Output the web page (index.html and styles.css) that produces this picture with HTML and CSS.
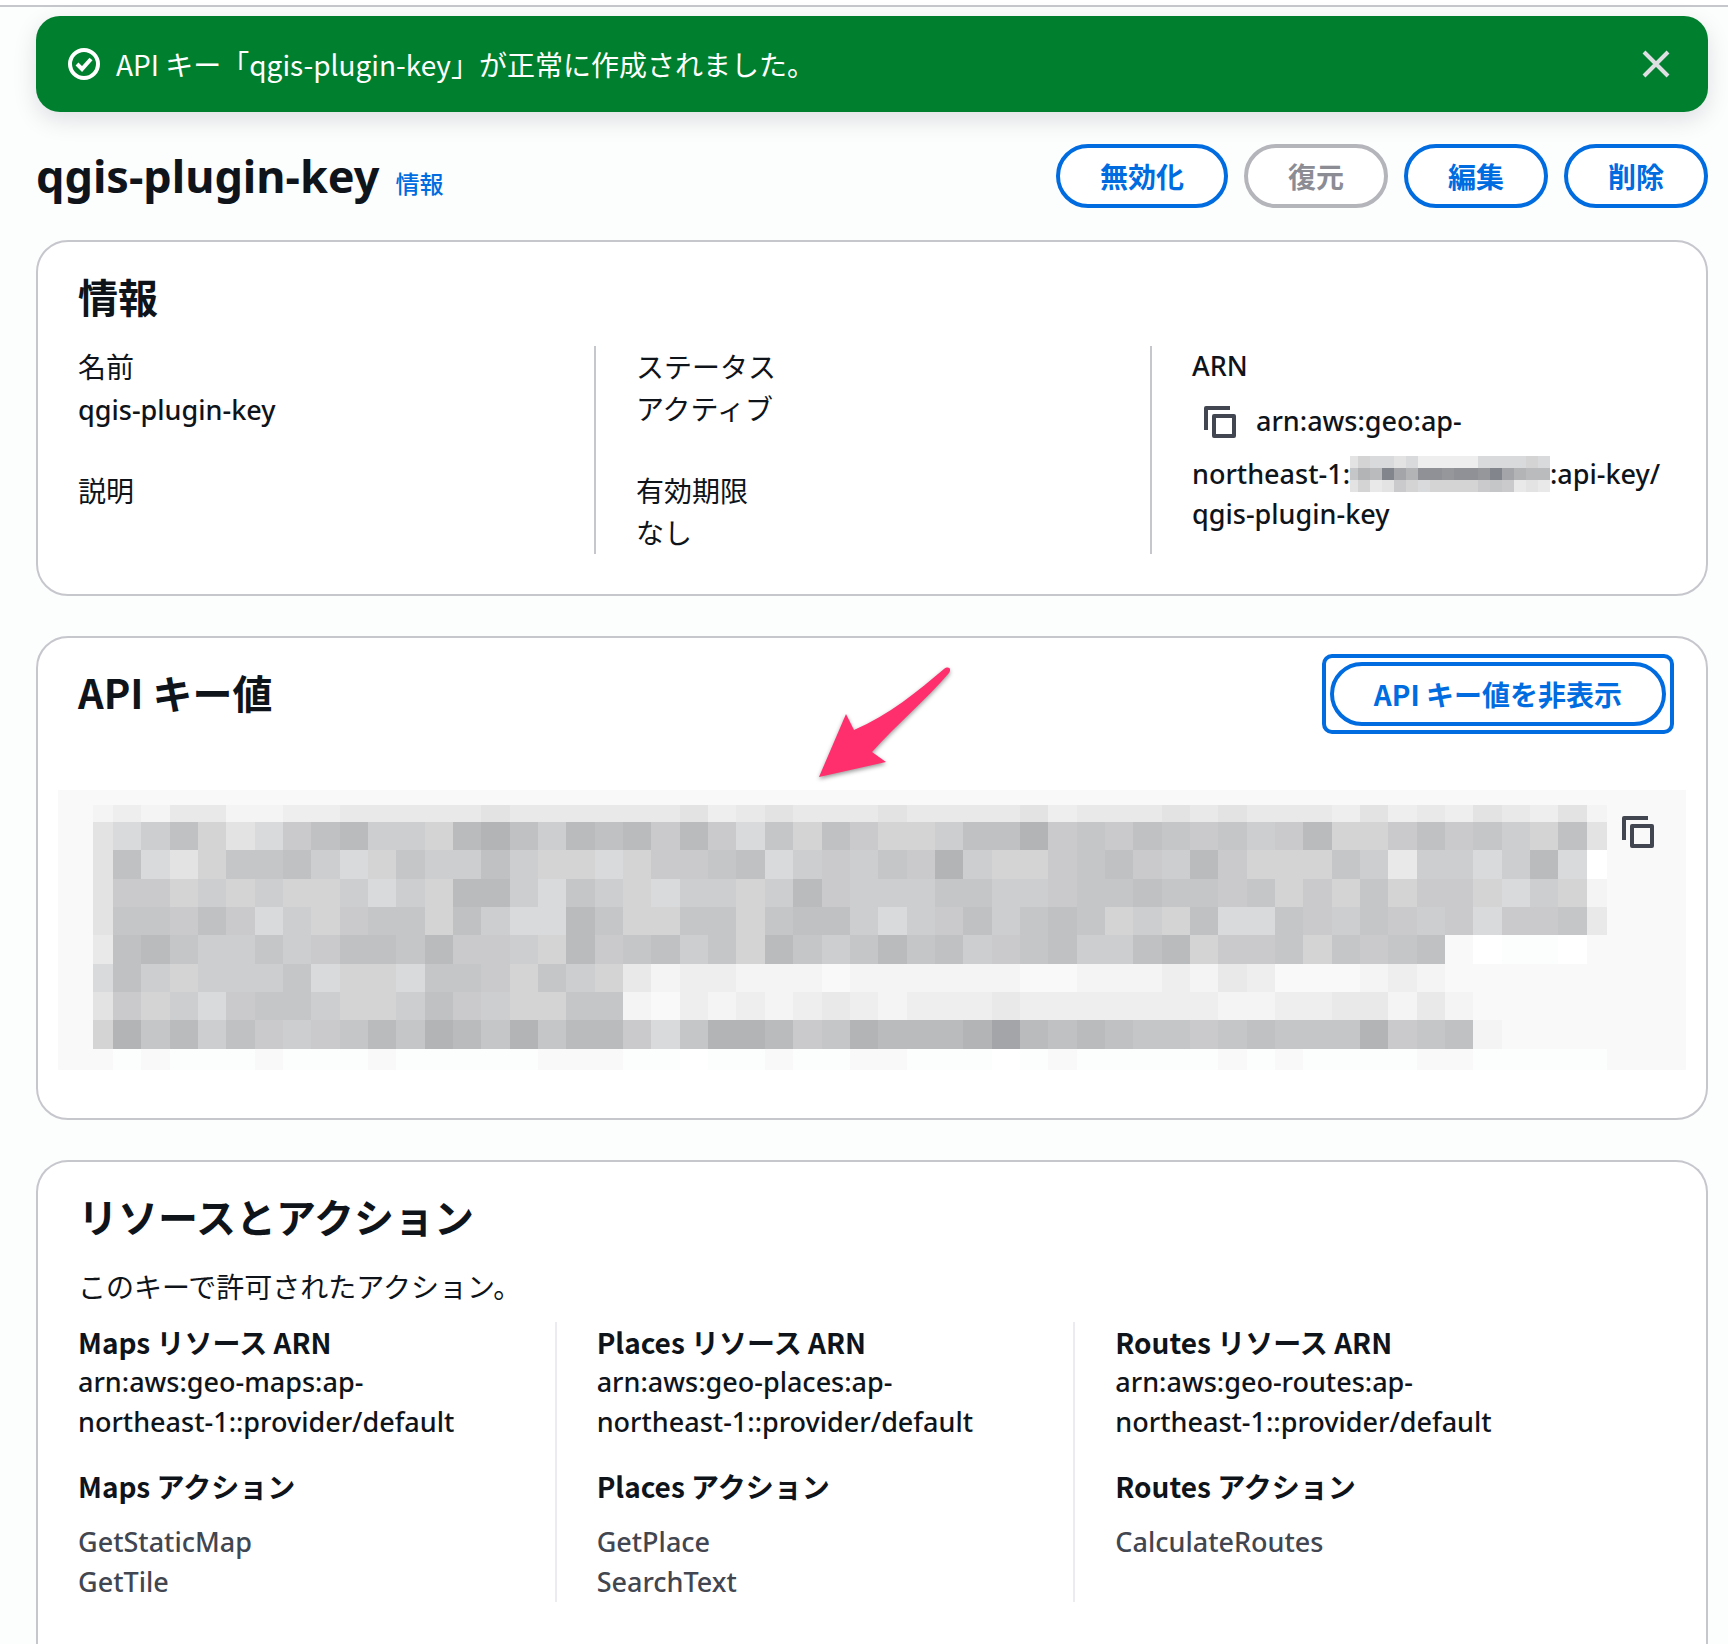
FILE: index.html
```html
<!DOCTYPE html>
<html lang="ja">
<head>
<meta charset="utf-8">
<meta name="viewport" content="width=device-width, initial-scale=1">
<title>qgis-plugin-key</title>
<link rel="stylesheet" href="styles.css">
</head>
<body>
<svg class="sprite" aria-hidden="true">
  <symbol id="icon-copy" viewBox="0 0 32 32">
    <path d="M2 24V2H26" fill="none" stroke="currentColor" stroke-width="4" stroke-linejoin="round"/>
    <rect x="10" y="10" width="20" height="20" fill="none" stroke="currentColor" stroke-width="4" stroke-linejoin="round"/>
  </symbol>
</svg>
<main class="page">
  <div class="flash" role="status">
    <svg class="flash-icon" viewBox="0 0 32 32" aria-hidden="true">
      <circle cx="16" cy="16" r="14" fill="none" stroke="currentColor" stroke-width="4"/>
      <path d="M9 16l5 5 9-10" fill="none" stroke="currentColor" stroke-width="4"/>
    </svg>
    <p class="flash-text">API キー「qgis-plugin-key」が正常に作成されました。</p>
    <button class="icon-button flash-close" type="button" aria-label="閉じる">
      <svg viewBox="0 0 32 32" aria-hidden="true"><path d="M4 4l24 24M28 4L4 28" fill="none" stroke="currentColor" stroke-width="4"/></svg>
    </button>
  </div>

  <header class="page-header">
    <div class="page-title">
      <h1>qgis-plugin-key</h1>
      <a class="info-link" href="#">情報</a>
    </div>
    <div class="actions">
      <button class="button" type="button">無効化</button>
      <button class="button" type="button" disabled>復元</button>
      <button class="button" type="button">編集</button>
      <button class="button" type="button">削除</button>
    </div>
  </header>

  <section class="card">
    <div class="card-header"><h2>情報</h2></div>
    <div class="columns details">
      <dl class="column">
        <div><dt>名前</dt><dd class="latin">qgis-plugin-key</dd></div>
        <div><dt>説明</dt><dd></dd></div>
      </dl>
      <dl class="column">
        <div><dt>ステータス</dt><dd>アクティブ</dd></div>
        <div><dt>有効期限</dt><dd>なし</dd></div>
      </dl>
      <dl class="column latin">
        <div>
          <dt>ARN</dt>
          <dd class="arn"><button class="icon-button copy-inline" type="button" aria-label="ARN をコピー"><svg aria-hidden="true"><use href="#icon-copy"/></svg></button>arn:aws:geo:ap-<br>northeast-1:<svg class="mask" id="account-mask" role="img" aria-label="非表示のアカウント ID"></svg>:api-key/<br>qgis-plugin-key</dd>
        </div>
      </dl>
    </div>
  </section>

  <section class="card key-card">
    <div class="card-header">
      <h2>API キー値</h2>
      <button class="button focused" type="button">API キー値を非表示</button>
    </div>
    <div class="key-box">
      <svg class="key-mask" id="key-mask" role="img" aria-label="非表示の API キー値"></svg>
      <button class="icon-button" type="button" aria-label="API キー値をコピー"><svg aria-hidden="true"><use href="#icon-copy"/></svg></button>
    </div>
    <svg class="arrow" viewBox="0 0 140 120" aria-hidden="true">
      <path d="M4 113L31 50L39 66C74 51 103 27 129 5C133 2 137 4 134 9C109 38 83 59 57 88L71 98Z" fill="#ff2e6c"/>
    </svg>
  </section>

  <section class="card last-card">
    <div class="card-header"><h2>リソースとアクション</h2></div>
    <p class="description">このキーで許可されたアクション。</p>
    <div class="columns resources">
      <div class="column">
        <h3>Maps リソース ARN</h3>
        <p class="latin">arn:aws:geo-maps:ap-<br>northeast-1::provider/default</p>
        <h3 class="spaced">Maps アクション</h3>
        <ul class="latin"><li>GetStaticMap</li><li>GetTile</li></ul>
      </div>
      <div class="column">
        <h3>Places リソース ARN</h3>
        <p class="latin">arn:aws:geo-places:ap-<br>northeast-1::provider/default</p>
        <h3 class="spaced">Places アクション</h3>
        <ul class="latin"><li>GetPlace</li><li>SearchText</li></ul>
      </div>
      <div class="column">
        <h3>Routes リソース ARN</h3>
        <p class="latin">arn:aws:geo-routes:ap-<br>northeast-1::provider/default</p>
        <h3 class="spaced">Routes アクション</h3>
        <ul class="latin"><li>CalculateRoutes</li></ul>
      </div>
    </div>
  </section>
</main>
<script src="mask.js"></script>
</body>
</html>
```
FILE: styles.css
```css
* { box-sizing: border-box; }

body {
  margin: 0;
  background: #fcfdfd;
  color: #0f141a;
  font: 400 28px/40px "Noto Sans CJK JP", sans-serif;
}

h1, h2, h3, p, dl, dd, ul { margin: 0; padding: 0; }
ul { list-style: none; }
.sprite { display: none; }

.latin {
  font-family: "Noto Sans", "Noto Sans CJK JP", sans-serif;
  font-size: 27px;
  font-weight: 500;
}

.page {
  display: flex;
  flex-direction: column;
  min-height: 100vh;
  padding: 16px 20px 0 36px;
  background: linear-gradient(#fff 5px, #c6c6cd 5px, #c6c6cd 7px, transparent 7px);
}

.flash {
  display: flex;
  align-items: center;
  gap: 16px;
  min-height: 96px;
  padding: 16px 36px 16px 32px;
  border-radius: 24px;
  background: #00802f;
  color: #fff;
  box-shadow: 0 8px 24px rgba(0, 7, 22, 0.12);
}
.flash-icon { flex: none; width: 32px; height: 32px; }
.flash-text { flex: 1; }

.icon-button {
  flex: none;
  width: 32px;
  height: 32px;
  padding: 0;
  border: 0;
  background: none;
  color: #424650;
}
.icon-button svg { display: block; width: 32px; height: 32px; }
.icon-button.flash-close { color: #dedee3; }

.page-header {
  display: flex;
  justify-content: space-between;
  align-items: center;
  margin: 32px 0;
}
.page-title { display: flex; align-items: baseline; gap: 16px; }
h1 { font: 700 45px/60px "Noto Sans", sans-serif; }
.info-link { color: #006ce0; font-size: 24px; font-weight: 500; text-decoration: none; }
.actions { display: flex; gap: 16px; }

.button {
  height: 64px;
  padding: 0 40px;
  border: 4px solid #006ce0;
  border-radius: 32px;
  background: #fff;
  color: #006ce0;
  font: 700 28px/40px "Noto Sans CJK JP", sans-serif;
}
.button:disabled { border-color: #b4b4bb; color: #8c8c94; }
.focused { position: relative; outline: 4px solid transparent; }
.focused::after {
  content: "";
  position: absolute;
  inset: -12px;
  border: 4px solid #006ce0;
  border-radius: 10px;
}

.card {
  padding: 24px 40px 40px;
  margin-bottom: 40px;
  border: 2px solid #c6c6cd;
  border-radius: 32px;
  background: #fff;
}
.card-header {
  display: flex;
  justify-content: space-between;
  align-items: center;
  min-height: 64px;
  margin-bottom: 16px;
}
h2 { padding-bottom: 4px; font-size: 40px; line-height: 48px; font-weight: 700; }
h3 { font-size: 28px; line-height: 40px; font-weight: 700; }

.columns { display: grid; grid-template-columns: repeat(3, minmax(0, 1fr)); gap: 80px; }
.column + .column {
  margin-left: -40px;
  padding-left: 40px;
  border-left: 2px solid #c6c6cd;
}
.details .column { display: flex; flex-direction: column; gap: 40px; }
.details dd { min-height: 44px; line-height: 44px; }
.details dd.latin { margin-bottom: -4px; line-height: 48px; }
.details .arn { padding-top: 8px; line-height: 40px; }
.copy-inline { width: 56px; height: 60px; padding: 12px 12px 16px; margin-right: 8px; vertical-align: middle; }
.mask { width: 200px; height: 36px; vertical-align: -8px; }

.key-card { position: relative; padding-bottom: 48px; }
.key-card .card-header { margin-bottom: 64px; }
.key-box {
  display: flex;
  align-items: flex-start;
  gap: 15px;
  margin: 0 -20px;
  padding: 15px 32px 0 35px;
  background: #f9f9f9;
}
.key-mask { flex: 1; min-width: 0; height: 265px; }
.key-box .icon-button { margin-top: 11px; }
.arrow {
  position: absolute;
  left: 46.6%;
  top: 26px;
  width: 140px;
  height: 120px;
  filter: drop-shadow(0 2px 2px rgba(0, 0, 0, 0.4));
}

.last-card {
  flex: 1;
  margin-bottom: 0;
  border-bottom: 0;
  border-radius: 32px 32px 0 0;
}
.description { margin-bottom: 16px; }
.resources { padding-right: 112px; }
.resources .column + .column { margin-left: -42px; border-left-color: #ebebf0; }
.spaced { margin: 24px 0 16px; }
.resources ul { color: #424650; }
```
FILE: mask.js
```js
// Grey shades, indexed by one character per mosaic cell.
const SHADES = {
  0: "#ffffff", 1: "#fcfdfd", 2: "#f9f9f9", 3: "#f4f4f4", 4: "#eeeeee",
  5: "#e9e9e9", 6: "#e3e3e3", 7: "#d9dadc", 8: "#d4d4d4", 9: "#cdced0",
  a: "#cacacc", b: "#c5c6c8", c: "#c0c1c3", d: "#babbbd", e: "#b3b4b6",
  f: "#a4a5a9", g: "#909196", h: "#96979b", i: "#83858c"
};

const KEY_ROWS = [
  "343553344555556555555645655565555645556565554645465463",
  "679c867acd998dec9dcdada7b8ca889cceabacbab9ad88acab98c6",
  "6c768bbc978b99c98878aabc79a9bae988abca9da888b959979d70",
  "6aa8989889798dd97b9879989da999bb99abbcbbab8a8b8aa87983",
  "6bbaca798abb8c977db88bb8bcc979ac9bcb898c77ba9ba9a7aab5",
  "5cdb99b9accbdaa98dabc9b8db9bdbc9abc99cd8aab8babc201102",
  "7c98999b7887bba8b9853443332333333223334354222343222222",
  "6a897abb9889ca988bb32434345434445444444433445535322222",
  "8ebd9ca9abdbedbebdda7beedabedddefdcdcbbabcbbbeabc32222",
  "212111211121111122211011211221110121111121211112211111"
];

const ACCOUNT_ROWS = ["68776744444777787", "bedifegghgghifedd", "6856a878888aba565"];

// xs and ys hold the cell edges; each cell is filled from the matching character.
function drawMask(id, rows, xs, ys) {
  const svg = document.getElementById(id);
  svg.setAttribute("viewBox", `0 0 ${xs[xs.length - 1]} ${ys[ys.length - 1]}`);
  svg.setAttribute("preserveAspectRatio", "none");
  svg.setAttribute("shape-rendering", "crispEdges");
  rows.forEach((row, r) => {
    [...row].slice(0, xs.length - 1).forEach((shade, c) => {
      const rect = document.createElementNS("http://www.w3.org/2000/svg", "rect");
      rect.setAttribute("x", xs[c]);
      rect.setAttribute("y", ys[r]);
      rect.setAttribute("width", xs[c + 1] - xs[c]);
      rect.setAttribute("height", ys[r + 1] - ys[r]);
      rect.setAttribute("fill", SHADES[shade]);
      svg.append(rect);
    });
  });
}

const keyXs = [0, ...Array.from({ length: 53 }, (_, i) => Math.round(20 + i * 28.34)), 1514];
const keyYs = [0, 17, 45, 74, 102, 130, 159, 187, 215, 244, 265];
drawMask("key-mask", KEY_ROWS, keyXs, keyYs);

const accountXs = [0, ...Array.from({ length: 17 }, (_, i) => 8 + i * 12)];
drawMask("account-mask", ACCOUNT_ROWS, accountXs, [0, 12, 24, 36]);
```
